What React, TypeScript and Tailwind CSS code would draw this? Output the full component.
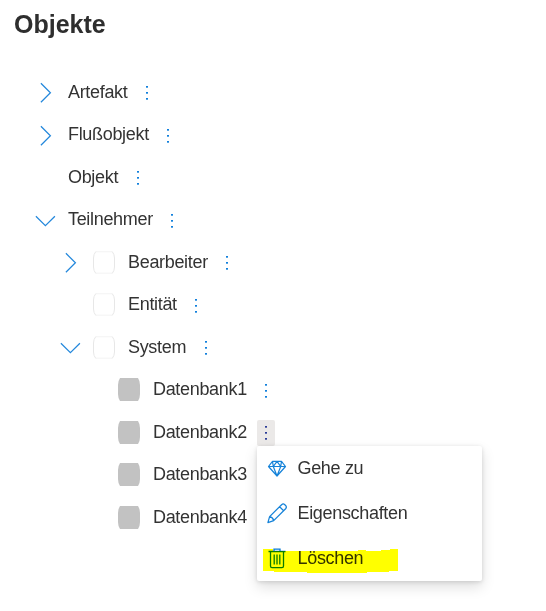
import React from 'react';

type Chevron = 'right' | 'down' | null;
type Box = 'empty' | 'filled' | null;
interface Item {
  label: string;
  level: string;
  chevron?: Chevron;
  box?: Box;
  active?: boolean;
  covered?: boolean;
}

const items: Item[] = [
  { label: 'Artefakt', level: 'pl-[35px]', chevron: 'right' },
  { label: 'Flußobjekt', level: 'pl-[35px]', chevron: 'right' },
  { label: 'Objekt', level: 'pl-[35px]' },
  { label: 'Teilnehmer', level: 'pl-[35px]', chevron: 'down' },
  { label: 'Bearbeiter', level: 'pl-[60px]', chevron: 'right', box: 'empty' },
  { label: 'Entität', level: 'pl-[60px]', box: 'empty' },
  { label: 'System', level: 'pl-[60px]', chevron: 'down', box: 'empty' },
  { label: 'Datenbank1', level: 'pl-[85px]', box: 'filled' },
  { label: 'Datenbank2', level: 'pl-[85px]', box: 'filled', active: true },
  { label: 'Datenbank3', level: 'pl-[85px]', box: 'filled', covered: true },
  { label: 'Datenbank4', level: 'pl-[85px]', box: 'filled', covered: true },
];

function Toggle({ dir }: { dir: Chevron }) {
  return (
    <svg className="h-[22px] w-[21px] shrink-0" viewBox="0 0 21 22" fill="none" stroke="#2488dc" strokeWidth="1.25">
      {dir === 'right' && <path d="M5.9 2.3 15.4 11.8 5.9 21.3" />}
      {dir === 'down' && <path d="M.9 7.2 10.4 16.7 19.9 7.2" />}
    </svg>
  );
}

function BoxIcon({ kind }: { kind: Box }) {
  if (kind === 'filled') {
    return (
      <svg className="ml-[12px] h-[23px] w-[22px] shrink-0" viewBox="0 0 22 23">
        <path d="M2 0H20Q22 3 22 7V16Q22 20 20 23H2Q0 20 0 16V7Q0 3 2 0Z" fill="#c2c2c2" />
      </svg>
    );
  }
  return (
    <svg className="ml-[12px] h-[23px] w-[22px] shrink-0" viewBox="0 0 22 23" fill="none">
      <path d="M3 .8H19M3 22.2H19" stroke="#f3f3f3" />
      <path d="M2.8 .5Q.5 3.5 .5 7V16Q.5 19.5 2.8 22.5M19.2 .5Q21.5 3.5 21.5 7V16Q21.5 19.5 19.2 22.5" stroke="#e7e7e7" />
    </svg>
  );
}

function More({ active }: { active?: boolean }) {
  return (
    <button className={`mt-[2px] flex h-[26px] w-[18px] shrink-0 items-center justify-center rounded-[2px] ${active ? 'bg-[#ebe9e8]' : ''}`}>
      <svg className="h-[14px] w-[2px]" viewBox="0 0 2 14" fill={active ? '#2c3d98' : '#1280dc'}>
        <rect width="2" height="1.7" />
        <rect y="6" width="2" height="1.7" />
        <rect y="12" width="2" height="1.7" />
      </svg>
    </button>
  );
}

function Menu() {
  return (
    <div className="absolute left-[257px] top-[446px] h-[135px] w-[225px] rounded-[2px] bg-white shadow-[0_6px_14px_rgba(0,0,0,0.13),0_1px_4px_rgba(0,0,0,0.13)]">
      <div className="flex h-[45px] items-center pl-[10px]">
        <svg className="h-5 w-5" viewBox="0 0 20 20" fill="none" stroke="#1683d9" strokeWidth="1.2" strokeLinejoin="round">
          <path d="M5.5 2.3H14.5L18.5 7.5 10 17 1.5 7.5ZM1.5 7.5H18.5M6.3 7.5 10 17 13.7 7.5M5.5 2.3 6.3 7.5 10 2.3 13.7 7.5 14.5 2.3" />
        </svg>
        <span className="ml-[10.5px] pb-px">Gehe zu</span>
      </div>
      <div className="flex h-[45px] items-center pl-[10px]">
        <svg className="h-[21px] w-5" viewBox="0 0 20 21" fill="none" stroke="#1683d9" strokeWidth="1.25" strokeLinejoin="round">
          <path d="M.9 19.6 2.6 13.6 14.6 1.7Q16.2.2 17.8 1.7L18.6 2.5Q20.1 4.1 18.6 5.7L6.7 17.6ZM2.6 13.6Q6 14.2 6.7 17.6M12.6 3.7 16.6 7.7" />
        </svg>
        <span className="ml-[10.5px] pb-px">Eigenschaften</span>
      </div>
      <div className="flex h-[45px] items-center pl-[10px]">
        <svg className="h-[21px] w-5" viewBox="0 0 20 21" fill="none" stroke="#087bd3" strokeWidth="1.3">
          <path d="M1.5 3.5H18.5M7 3.5V1.2H13V3.5M3.5 3.5V18Q3.5 19.6 5 19.6H15Q16.5 19.6 16.5 18V3.5M7.2 6.5V16.5M10 6.5V16.5M12.8 6.5V16.5" />
        </svg>
        <span className="ml-[10.5px] pb-px">Löschen</span>
      </div>
      <svg className="absolute left-[6px] top-[103px] h-6 w-[135px] mix-blend-multiply" viewBox="0 0 135 24" fill="#ffff00" shapeRendering="crispEdges">
        <path d="M0 0H10V2H95V1H103V2H118V1H127V0H135V22H126V23H104V24H44V23H11V22H0Z" />
      </svg>
    </div>
  );
}

export default function App() {
  return (
    <main className="relative h-[611px] w-[546px] overflow-hidden bg-white font-['Liberation_Sans',Arial,sans-serif] text-[18px] leading-[20px] tracking-[-0.32px] text-[#333333]">
      <h1 className="pl-[14px] pt-[9px] text-[25px] font-bold leading-[30px] tracking-normal text-[#2e2e2e]">Objekte</h1>
      <ul className="pt-[32px]">
        {items.map((item) => (
          <li key={item.label} className={`flex h-[42.5px] items-center ${item.level}`}>
            <Toggle dir={item.chevron ?? null} />
            {item.box ? <BoxIcon kind={item.box} /> : null}
            <span className={`pb-px pr-[10.5px] ${item.box ? 'ml-[13px]' : 'ml-[12px]'}`}>{item.label}</span>
            {!item.covered && <More active={item.active} />}
          </li>
        ))}
      </ul>
      <Menu />
    </main>
  );
}
